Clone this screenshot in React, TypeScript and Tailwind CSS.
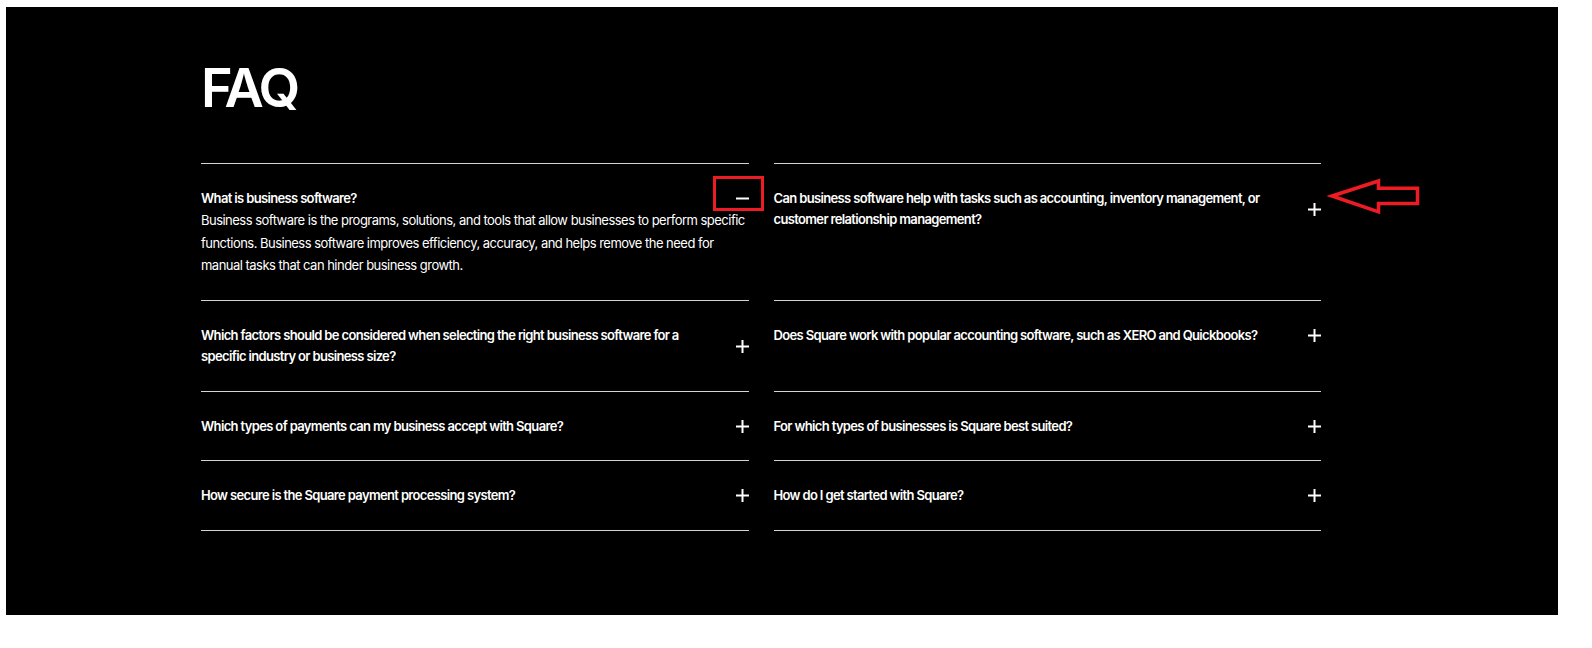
import * as React from 'react'

type Faq = { q: string; a?: string; open?: boolean }

const left: Faq[] = [
  {
    q: 'What is business software?',
    a: 'Business software is the programs, solutions, and tools that allow businesses to perform specific functions. Business software improves efficiency, accuracy, and helps remove the need for manual tasks that can hinder business growth.',
    open: true,
  },
  { q: 'Which factors should be considered when selecting the right business software for a specific industry or business size?' },
  { q: 'Which types of payments can my business accept with Square?' },
  { q: 'How secure is the Square payment processing system?' },
]

const right: Faq[] = [
  { q: 'Can business software help with tasks such as accounting, inventory management, or customer relationship management?' },
  { q: 'Does Square work with popular accounting software, such as XERO and Quickbooks?' },
  { q: 'For which types of businesses is Square best suited?' },
  { q: 'How do I get started with Square?' },
]

function Toggle({ open }: { open?: boolean }) {
  return (
    <svg width="13" height="13" viewBox="0 0 13 13" className="shrink-0" fill="none">
      <path d="M0 6.5h13" stroke="white" strokeWidth="2" />
      {!open && <path d="M6.5 0v13" stroke="white" strokeWidth="2" />}
    </svg>
  )
}

function Item({ item, last }: { item: Faq; last: boolean }) {
  return (
    <div className={`border-t border-[#d4d4d4] pt-[24px] pb-[23.5px] ${last ? 'border-b' : ''}`}>
      <div className="flex items-center justify-between">
        <h3 className="w-[500px] font-['Inter'] font-semibold text-[13px] leading-[21px] tracking-[-0.05em] text-white">
          {item.q}
        </h3>
        <Toggle open={item.open} />
      </div>
      {item.open && item.a && (
        <p className="font-['Inter'] text-[13px] leading-[22.5px] tracking-[-0.04em] text-white">{item.a}</p>
      )}
    </div>
  )
}

export default function App() {
  const rows = left.map((l, i) => [l, right[i]])
  return (
    <div className="min-h-[648px] bg-white pt-[7px] pl-[6px]">
      <div className="relative h-[608px] w-[1552px] bg-black pl-[195px] pt-[54px]">
        <h1 className="font-['Inter'] font-semibold text-[54px] leading-[54px] tracking-[-0.06em] text-white">FAQ</h1>

        <div className="mt-[48px] grid w-[1120px] grid-cols-2 gap-x-[25px]">
          {rows.map(([l, r], i) => (
            <React.Fragment key={i}>
              <Item item={l} last={i === rows.length - 1} />
              <Item item={r} last={i === rows.length - 1} />
            </React.Fragment>
          ))}
        </div>

        {/* annotation overlays */}
        <div className="absolute left-[707px] top-[169px] h-[35px] w-[51px] border-[3.5px] border-[#ed1c24]" />
        <svg className="absolute left-[1320px] top-[168px]" width="98" height="43" viewBox="0 0 98 43" fill="none">
          <path
            d="M6 21L52.5 6V13.2H91.5V28.5H52.5V36.8Z"
            stroke="#ed1c24"
            strokeWidth="3.5"
            strokeLinejoin="miter"
          />
        </svg>
      </div>
    </div>
  )
}
